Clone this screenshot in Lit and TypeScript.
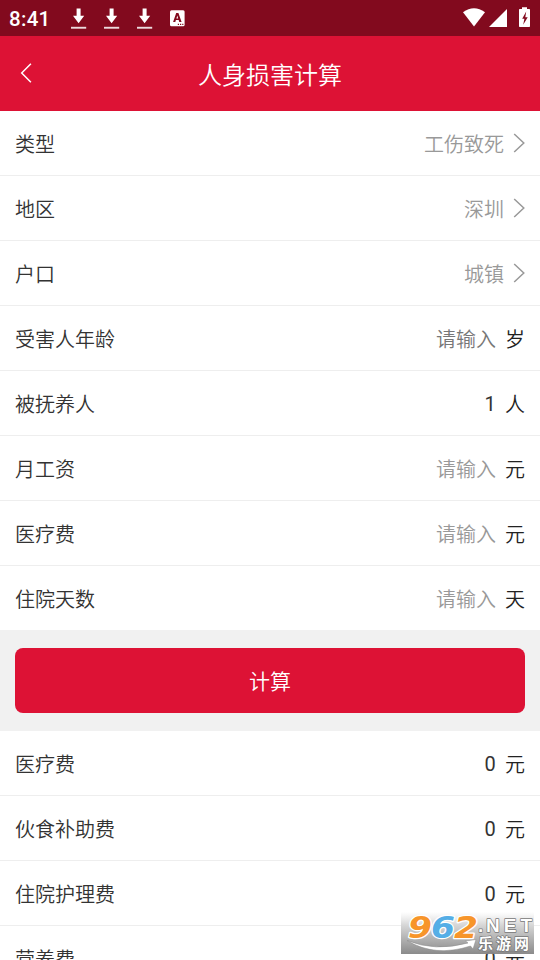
import { LitElement, html, css, svg, nothing } from "lit";
import { customElement, property } from "lit/decorators.js";
import { classMap } from "lit/directives/class-map.js";

@customElement("status-bar")
class StatusBar extends LitElement {
  static styles = css`
    :host {
      display: flex;
      align-items: center;
      height: 36px;
      box-sizing: border-box;
      background: #820a1e;
      color: #fff;
      font-family: Roboto, sans-serif;
    }
    .clock {
      width: 71px;
      padding-left: 9px;
      box-sizing: border-box;
      font-size: 20.5px;
      font-weight: 500;
      line-height: 36px;
      padding-top: 1px;
      letter-spacing: 0.3px;
    }
    .notes {
      display: flex;
      flex: 1;
    }
    svg {
      display: block;
      fill: #fff;
    }
  `;

  render() {
    const download = html`<svg width="33" height="36" viewBox="0 0 33 36">
      <path d="M5.6 8.5h4v7.2h3.6L7.6 23.2 2 15.700h3.600z" />
      <path d="M0 26.800h15.200v1.900H0z" opacity=".85" />
    </svg>`;
    return html`
      <div class="clock">8:41</div>
      <div class="notes">
        ${download}${download}${download}
        <svg width="16" height="36" viewBox="0 0 16 36">
          <rect x="0" y="10.200" width="14.600" height="16" rx="1.500" />
          <path
            fill="#820a1e"
            fill-rule="evenodd"
            d="M6.200 13h2.200l3.200 9H9.300l-.6-1.900H5.900L5.300 22H3.100zM7.300 15.500l-.9 3h1.800z"
          />
          <path fill="#820a1e" d="M7.800 23.700h1.200v1.200H7.800zM10 23.700h1.200v1.200H10zM12.200 23.700h1.200v1.200h-1.200z" />
        </svg>
      </div>
      <svg width="77" height="36" viewBox="463 0 77 36">
        <path d="M463 12.300Q474 4.300 485 12.300L474 26.500z" />
        <path d="M507 9v18h-18z" />
        <path d="M522 7.200h5v1.800h2.300q.7 0 .7.700v16.600q0 .7-.7.700h-9.600q-.7 0-.7-.7V9.700q0-.7.7-.7h2.300z" />
        <path fill="#820a1e" d="M526.200 11.500l-4 7.200h2.200l-1.200 6 4.500-7.500h-2.400z" />
      </svg>
    `;
  }
}

@customElement("nav-header")
class NavHeader extends LitElement {
  @property() heading = "";

  static styles = css`
    :host {
      display: grid;
      grid-template-columns: 60px 1fr 60px;
      align-items: center;
      height: 75px;
      background: #dd1235;
      color: #fff;
    }
    svg {
      display: block;
      margin: -1px 0 0 20px;
      fill: none;
      stroke: #fff;
      stroke-width: 1.5;
    }
    .title {
      text-align: center;
      font-size: 24px;
      line-height: 36px;
      padding-top: 1px;
    }
  `;

  render() {
    return html`
      <svg width="12" height="22" viewBox="0 0 12 22"><path d="M10.900 1.700 1.700 11l9.200 9.300" /></svg>
      <div class="title">${this.heading}</div>
    `;
  }
}

@customElement("form-row")
class FormRow extends LitElement {
  @property() label = "";
  @property() value = "";
  @property() unit = "";
  @property() kind = "number";

  static styles = css`
    :host {
      display: flex;
      align-items: center;
      height: 65px;
      padding: 0 15px;
      box-sizing: border-box;
      border-bottom: 1px solid #eee;
      background: #fff;
      color: #333;
      font-size: 20px;
      line-height: 30px;
    }
    :host([last]) {
      height: 64px;
      border-bottom: 0;
    }
    .label,
    .hint,
    .number,
    .unit {
      padding-top: 2px;
    }
    .label {
      flex: 1;
    }
    .hint {
      color: #999;
    }
    .hint.focused {
      color: #777;
    }
    .number {
      font-family: Roboto, sans-serif;
      font-weight: 400;
      letter-spacing: 0.2px;
    }
    .unit {
      margin-left: 9px;
      color: #222;
    }
    svg {
      display: block;
      margin-left: 9px;
      fill: none;
      stroke: #999;
      stroke-width: 1.5;
    }
  `;

  render() {
    const classes = {
      hint: this.kind !== "number",
      focused: this.kind === "focused",
      number: this.kind === "number",
    };
    return html`
      <span class="label">${this.label}</span>
      <span class=${classMap(classes)}>${this.value}</span>
      ${this.unit ? html`<span class="unit">${this.unit}</span>` : nothing}
      ${this.kind === "select"
        ? html`<svg width="12" height="20" viewBox="0 0 12 20"><path d="M1.200 1l9.600 9-9.600 9" /></svg>`
        : nothing}
    `;
  }
}

@customElement("site-badge")
class SiteBadge extends LitElement {
  static styles = css`
    :host {
      display: block;
    }
    svg {
      display: block;
    }
    text {
      font-weight: 700;
      paint-order: stroke;
      stroke-linejoin: round;
    }
    .digits {
      font-family: "DejaVu Sans", sans-serif;
      font-size: 31px;
      font-style: italic;
      stroke: #fff;
      stroke-width: 2.5;
    }
    .net {
      font-family: "Liberation Sans", sans-serif;
      font-size: 19px;
      fill: #fff;
      stroke: #777;
      stroke-width: 1.4;
    }
    .name {
      font-family: "Noto Sans CJK SC", sans-serif;
      font-size: 15px;
      fill: #fff;
      stroke: #777;
      stroke-width: 1.4;
    }
  `;

  render() {
    const digits = [
      ["9", 7, "#f7952a"],
      ["6", 30, "#55aee6"],
      ["2", 53, "#f7952a"],
    ];
    return html`<svg width="133" height="42" viewBox="0 0 133 42">
      <defs>
        <linearGradient id="shade" x1="0" y1="0" x2="0" y2="1">
          <stop offset="0" stop-color="#fff" stop-opacity=".8" />
          <stop offset=".3" stop-color="#d8d8d8" />
          <stop offset="1" stop-color="#858585" stop-opacity=".95" />
        </linearGradient>
      </defs>
      <rect width="133" height="42" fill="url(#shade)" />
      ${digits.map(
        ([d, x, c]) =>
          svg`<text class="digits" x=${x} y="25.500" fill=${c} textLength="24" lengthAdjust="spacingAndGlyphs">${d}</text>`
      )}
      <path
        d="M6 28.500Q34 40 67 31L64.500 29 75 27.500 72 37 69.500 34Q34 45.500 6 28.500z"
        fill="#fff"
        stroke="#888"
        stroke-width=".5"
      />
      <text class="net" x="77" y="20" textLength="6">.</text>
      <text class="net" x="85" y="20" textLength="46">NET</text>
      <text class="name" x="77" y="37" textLength="51">乐游网</text>
    </svg>`;
  }
}

const inputs = [
  { label: "类型", value: "工伤致死", kind: "select" },
  { label: "地区", value: "深圳", kind: "select" },
  { label: "户口", value: "城镇", kind: "select" },
  { label: "受害人年龄", value: "请输入", unit: "岁", kind: "focused" },
  { label: "被抚养人", value: "1", unit: "人", kind: "number" },
  { label: "月工资", value: "请输入", unit: "元", kind: "hint" },
  { label: "医疗费", value: "请输入", unit: "元", kind: "hint" },
  { label: "住院天数", value: "请输入", unit: "天", kind: "hint" },
];

const results = ["医疗费", "伙食补助费", "住院护理费", "营养费"];

@customElement("app-root")
class AppRoot extends LitElement {
  static styles = css`
    :host {
      display: flex;
      flex-direction: column;
      position: relative;
      width: 540px;
      height: 960px;
      overflow: hidden;
      background: #f1f1f1;
      font-family: "Noto Sans CJK SC", sans-serif;
      font-weight: 350;
    }
    status-bar,
    nav-header,
    form-row {
      flex-shrink: 0;
    }
    .action {
      flex-shrink: 0;
      padding: 18px 15px;
    }
    .submit {
      display: block;
      width: 100%;
      height: 65px;
      padding: 0 0 1px;
      border: 0;
      border-radius: 8px;
      background: #dd1235;
      color: #fff;
      font: inherit;
      font-size: 21px;
    }
    .badge {
      position: absolute;
      left: 401px;
      top: 912px;
    }
  `;

  render() {
    return html`
      <status-bar></status-bar>
      <nav-header heading="人身损害计算"></nav-header>
      ${inputs.map(
        (r, i) => html`<form-row
          .label=${r.label}
          .value=${r.value}
          .unit=${r.unit ?? ""}
          .kind=${r.kind}
          ?last=${i === inputs.length - 1}
        ></form-row>`
      )}
      <div class="action"><button class="submit">计算</button></div>
      ${results.map((label) => html`<form-row .label=${label} value="0" unit="元"></form-row>`)}
      <site-badge class="badge"></site-badge>
    `;
  }
}
